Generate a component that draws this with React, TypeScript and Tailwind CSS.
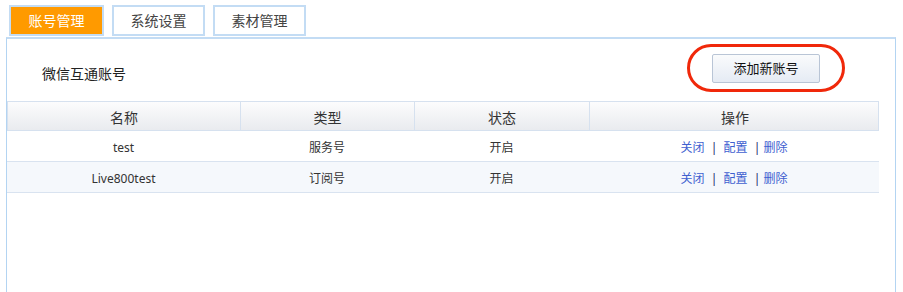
import React from "react";

const font = { fontFamily: '"Noto Sans", "Noto Sans CJK SC", sans-serif' };

const rows = [
  { name: "test", type: "服务号", status: "开启", bg: "bg-white" },
  { name: "Live800test", type: "订阅号", status: "开启", bg: "bg-[#f5f8fc]" },
];

export default function App() {
  return (
    <div className="w-[903px] h-[292px] overflow-hidden bg-white" style={font}>
      <div className="flex gap-[8px] pl-[9px] pt-[5px]">
        <div className="w-[95px] h-[31px] flex items-center justify-center bg-[#ff9a00] border-2 border-[#c3dcf4] text-white text-[14px]">
          账号管理
        </div>
        <div className="w-[93px] h-[31px] flex items-center justify-center bg-white border-2 border-[#c3dcf4] text-[#444] text-[14px]">
          系统设置
        </div>
        <div className="w-[93px] h-[31px] flex items-center justify-center bg-white border-2 border-[#c3dcf4] text-[#444] text-[14px]">
          素材管理
        </div>
      </div>
      <div className="ml-[6px] mt-[1px] w-[890px] h-[260px] border border-[#b3d4f2] border-t-2 border-t-[#c3dcf4]">
        <div className="relative h-[62px] flex items-start">
          <div className="ml-[35px] mt-[25px] text-[14px] leading-[20px] text-[#222]">微信互通账号</div>
          <div className="ml-auto mr-[75px] mt-[15px] w-[108px] h-[29px] flex items-center justify-center rounded-[2px] border border-[#b9c5d6] bg-gradient-to-b from-[#fafbfc] to-[#e5ebf4] text-[13px] text-[#111]">
            添加新账号
          </div>
          <div className="absolute left-[680px] top-[5px] w-[158px] h-[48px] rounded-[24px] border-[3px] border-[#f0280a]" />
        </div>
        <div className="w-[872px] text-[#333]">
          <div className="grid grid-cols-[233px_174px_175px_290px] h-[30px] border border-[#d6e1ef] bg-gradient-to-b from-[#fcfcfd] to-[#e9ebef] text-[14px]">
            <div className="flex items-center justify-center pt-[2px] border-r border-[#d6e1ef]">名称</div>
            <div className="flex items-center justify-center pt-[2px] border-r border-[#d6e1ef]">类型</div>
            <div className="flex items-center justify-center pt-[2px] border-r border-[#d6e1ef]">状态</div>
            <div className="flex items-center justify-center pt-[2px]">操作</div>
          </div>
          {rows.map((r) => (
            <div key={r.name} className={`grid grid-cols-[233px_174px_175px_290px] h-[31px] border-b border-[#d9e3f0] text-[12px] ${r.bg}`}>
              <div className="flex items-center justify-center pt-[3px]">{r.name}</div>
              <div className="flex items-center justify-center pt-[3px]">{r.type}</div>
              <div className="flex items-center justify-center pt-[3px]">{r.status}</div>
              <div className="flex items-center justify-center pt-[3px] whitespace-pre">
                <span className="text-[#4060d0]">关闭</span>
                <span className="text-[#1a2a6a]">{"  |  "}</span>
                <span className="text-[#4060d0]">配置</span>
                <span className="text-[#1a2a6a]">{"  | "}</span>
                <span className="text-[#4060d0]">删除</span>
              </div>
            </div>
          ))}
        </div>
      </div>
    </div>
  );
}
